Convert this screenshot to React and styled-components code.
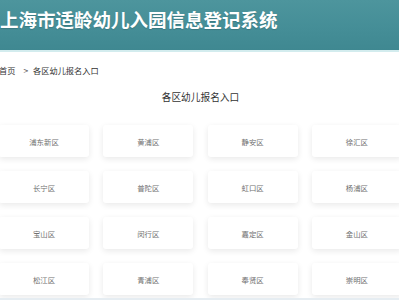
import React from "react";
import styled, { createGlobalStyle } from "styled-components";

const Global = createGlobalStyle`
  html, body { margin: 0; padding: 0; background: #fff; overflow: hidden; }
  body { font-family: "Noto Sans CJK SC", "Noto Sans", sans-serif; }
`;

const Page = styled.div`
  width: 399px;
  height: 300px;
  overflow: hidden;
  position: relative;
  background: #fff;
`;

const Header = styled.header`
  border-bottom: 2px solid #d3ecee;
  background: linear-gradient(180deg, #4d959d 0%, #458e97 55%, #3f8891 100%);
  display: flex;
  align-items: flex-start;
  padding-top: 7px;
  height: 43px;
`;

const Title = styled.h1`
  margin: 0;
  font-size: 18.5px;
  line-height: 24px;
  font-weight: 700;
  color: #fff;
  white-space: nowrap;
  text-shadow: 0 1px 1px rgba(0, 0, 0, 0.15);
`;

const Crumbs = styled.nav`
  display: flex;
  align-items: center;
  height: 14px;
  margin-top: 11px;
  font-size: 8.2px;
  color: #333;
  margin-left: -1px;
`;

const Sep = styled.span`
  color: #555;
  font-size: 8.5px;
  margin: 0 5px 0 8px;
`;

const SectionTitle = styled.h2`
  margin: 12px 0 0 -1px;
  text-align: center;
  font-size: 9.7px;
  line-height: 16px;
  font-weight: 400;
  color: #333;
  width: 403px;
`;

const Grid = styled.div`
  display: grid;
  grid-template-columns: repeat(4, 90px);
  column-gap: 14.3px;
  row-gap: 14px;
  width: 405px;
  margin-left: -1px;
  margin-top: 20px;
`;

const Card = styled.a`
  height: 32px;
  display: flex;
  align-items: center;
  justify-content: center;
  background: #fff;
  border-radius: 3px;
  box-shadow: 0 2px 6px rgba(0, 0, 0, 0.09);
  font-size: 7.4px;
  color: #707070;
  text-decoration: none;
`;

const BottomLine = styled.div`
  position: absolute;
  left: 0;
  right: 0;
  bottom: 0;
  height: 2px;
  background: #e6edf2;
`;

const districts = [
  "浦东新区", "黄浦区", "静安区", "徐汇区",
  "长宁区", "普陀区", "虹口区", "杨浦区",
  "宝山区", "闵行区", "嘉定区", "金山区",
  "松江区", "青浦区", "奉贤区", "崇明区",
];

export default function App() {
  return (
    <Page>
      <Global />
      <Header>
        <Title>上海市适龄幼儿入园信息登记系统</Title>
      </Header>
      <Crumbs>
        <span>首页</span>
        <Sep>&gt;</Sep>
        <span>各区幼儿报名入口</span>
      </Crumbs>
      <SectionTitle>各区幼儿报名入口</SectionTitle>
      <Grid>
        {districts.map((d) => (
          <Card key={d} href="#">{d}</Card>
        ))}
      </Grid>
      <BottomLine />
    </Page>
  );
}
